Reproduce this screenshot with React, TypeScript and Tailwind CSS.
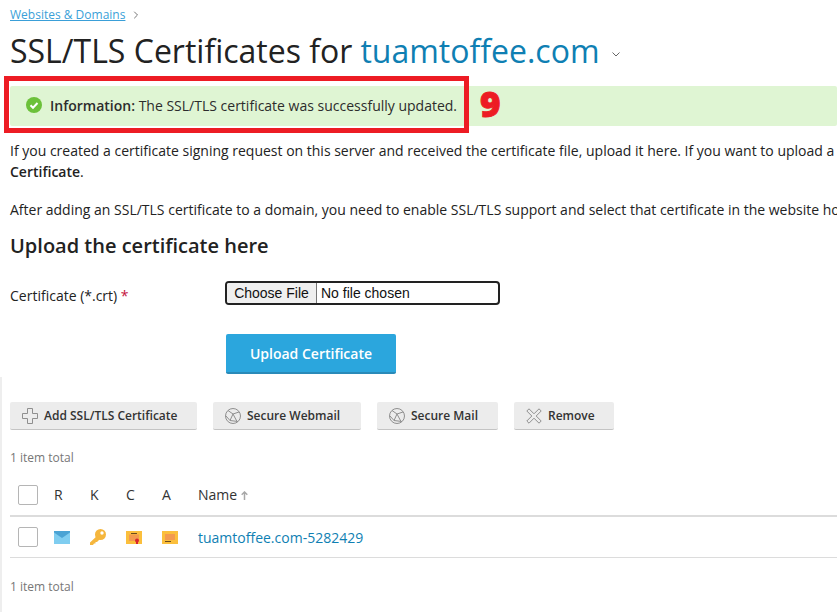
import React from 'react';
import { ChevronRight } from 'lucide-react';

const PlusIcon = () => (
  <svg width="16" height="16" viewBox="0 0 16 16" fill="none" stroke="#8f8f8f" strokeWidth="1">
    <path d="M5.5.5h5v5h5v5h-5v5h-5v-5h-5v-5h5z" />
  </svg>
);

const GlobeIcon = () => (
  <svg width="16" height="16" viewBox="0 0 16 16" fill="none" stroke="#8f8f8f" strokeWidth="1">
    <circle cx="8" cy="8" r="7.500" />
    <path d="M3 2.500 8 6l6-2M8 6 5 12.500 13 13.500M8 6l4 7.500M1 8l4 4.500" />
  </svg>
);

const CrossIcon = () => (
  <svg width="16" height="16" viewBox="0 0 16 16" fill="none" stroke="#8f8f8f" strokeWidth="1">
    <path d="M3 .8 8 5.800 13 .8 15.200 3 10.200 8l5 5-2.200 2.200-5-5-5 5L.8 13l5-5-5-5z" />
  </svg>
);

const CheckIcon = () => (
  <svg width="16" height="16" viewBox="0 0 16 16">
    <circle cx="8" cy="8" r="8" fill="#6cc13a" />
    <path d="M4.500 8.200 7 10.700l4.500-4.700" fill="none" stroke="#fff" strokeWidth="2" />
  </svg>
);

const MailIcon = () => (
  <svg className="block" width="16" height="13" viewBox="0 0 16 13">
    <rect width="16" height="13" fill="#7fcdf0" />
    <path d="M0 0h16v1.500L8 7 0 1.500z" fill="#4aa3d4" />
  </svg>
);

const KeyIcon = () => (
  <svg className="block" width="16" height="16" viewBox="0 0 16 16">
    <path d="M8 6 0 13.500V16h3l1-1.500h1.500V13H7l4-4z" fill="#f5b63d" />
    <circle cx="10.500" cy="5.500" r="5.500" fill="#f5b63d" />
    <circle cx="12" cy="4" r="1.700" fill="#fff" />
  </svg>
);

const CertIcon = () => (
  <svg className="block" width="16" height="13" viewBox="0 0 16 13">
    <rect width="16" height="13" fill="#fbbf3c" />
    <rect x="3" y="3.500" width="10" height="6.500" fill="#f39a4f" />
    <rect x="5" y="2" width="6" height="1" fill="#6b4a1e" />
    <circle cx="11" cy="9.500" r="2" fill="#d8262c" />
    <rect x="10" y="10" width="2" height="3" fill="#d8262c" />
  </svg>
);

const KeyCardIcon = () => (
  <svg className="block" width="16" height="13" viewBox="0 0 16 13">
    <rect width="16" height="13" fill="#fbbf3c" />
    <rect x="3" y="3" width="10" height="6" fill="#f39a4f" />
    <rect x="3" y="10" width="6" height="1" fill="#6b4a1e" />
  </svg>
);

const ToolButton: React.FC<{ icon: React.ReactNode; label: string; className: string }> = ({ icon, label, className }) => (
  <button className={`h-[28px] flex items-center gap-[6px] pl-3 bg-[#ececec] border-b border-[#c4c4c4] rounded-[2px] text-[12px] font-semibold text-[#333] ${className}`}>
    {icon}
    {label}
  </button>
);

const Checkbox = () => <span className="block w-5 h-5 bg-white border border-[#b5b5b5] rounded-[2px]" />;

const App: React.FC = () => {
  return (
    <div className="relative h-[612px] w-[837px] overflow-hidden bg-white pl-[10px] text-[#222] whitespace-nowrap" style={{ fontFamily: '"Open Sans", sans-serif' }}>
      <div className="absolute left-0 top-[377px] bottom-0 w-[2px] bg-[#eeeeee]" />

      <div className="flex items-center gap-[5px] pt-[6px] h-[23px] text-[12px]">
        <a className="text-[#3a9fd8] underline">Websites &amp; Domains</a>
        <ChevronRight size={12} className="text-[#777]" />
      </div>

      <div className="flex items-center mt-[4px] h-[48px] text-[32px] leading-[48px]">
        <span>SSL/TLS Certificates for</span>
        <span className="ml-[8px] text-[#0f7fb3]">tuamtoffee.com</span>
        <svg className="ml-[12px] mt-[6px]" width="8" height="5" viewBox="0 0 8 5" fill="none" stroke="#666" strokeWidth="1">
          <path d="M.5.500 4 4 7.500.500" />
        </svg>
      </div>

      <div className="mt-[11px] h-[40px] flex items-center gap-2 pl-4 pb-[2px] bg-[#dff5d3] rounded-[2px] text-[14px] text-[#2c2c2c]">
        <CheckIcon />
        <span><b className="font-semibold">Information:</b> The SSL/TLS certificate was successfully updated.</span>
      </div>
      <div className="absolute left-[4px] top-[76px] w-[465px] h-[57px] border-[5px] border-[#ed1c24]" />
      <div className="absolute left-[480px] top-[82px] text-[35px] leading-[44px] font-extrabold text-[#ed1c24] [-webkit-text-stroke:1px_#ed1c24]">9</div>

      <p className="mt-[14px] text-[14px] leading-[21px]">
        If you created a certificate signing request on this server and received the certificate file, upload it here. If you want to upload a<br />
        <b className="font-semibold">Certificate</b>.
      </p>
      <p className="mt-[17px] text-[14px] leading-[21px]">After adding an SSL/TLS certificate to a domain, you need to enable SSL/TLS support and select that certificate in the website hosting settings.</p>

      <h2 className="mt-[11px] text-[20px] leading-[30px] font-semibold">Upload the certificate here</h2>

      <div className="flex mt-[20px]">
        <label className="w-[215px] text-[14px] leading-[20px] pt-[5px]">Certificate (*.crt) <span className="text-[#c4123c]">*</span></label>
        <div className="w-[275px] h-[24px] flex items-center border-2 border-[#222] rounded-[4px] text-[14px] overflow-hidden" style={{ fontFamily: '"Liberation Sans", sans-serif' }}>
          <span className="h-full w-[90px] flex items-center justify-center bg-[#efefef] border-r border-[#777] text-[#111]">Choose File</span>
          <span className="ml-[4px] text-[#111]">No file chosen</span>
        </div>
      </div>

      <button className="block ml-[216px] mt-[28px] w-[170px] h-[40px] bg-[#2ba6dd] border-b-2 border-[#2a8ab8] rounded-[2px] text-[14px] font-semibold text-white">Upload Certificate</button>

      <div className="flex mt-[28px] gap-4">
        <ToolButton icon={<PlusIcon />} label="Add SSL/TLS Certificate" className="w-[187px]" />
        <ToolButton icon={<GlobeIcon />} label="Secure Webmail" className="w-[148px]" />
        <ToolButton icon={<GlobeIcon />} label="Secure Mail" className="w-[121px]" />
        <ToolButton icon={<CrossIcon />} label="Remove" className="w-[100px]" />
      </div>

      <div className="mt-[20px] text-[12px] leading-[16px] text-[#777]">1 item total</div>

      <div className="mt-[12px] flex items-center h-[39px] pb-[4px] border-b-2 border-[#dcdcdc] text-[14px] text-[#333]">
        <span className="pl-[8px] w-[44px]"><Checkbox /></span>
        <span className="w-[36px]">R</span>
        <span className="w-[36px]">K</span>
        <span className="w-[36px]">C</span>
        <span className="w-[36px]">A</span>
        <span>Name</span>
        <svg className="ml-[4px] mt-[2px]" width="7" height="9" viewBox="0 0 7 9" fill="none" stroke="#a8a8a8" strokeWidth="1.500">
          <path d="M3.500 9V1M.7 3.800 3.500 1l2.800 2.800" />
        </svg>
      </div>

      <div className="flex items-center h-[41px] border-b border-[#dcdcdc]">
        <span className="pl-[8px] w-[44px]"><Checkbox /></span>
        <span className="w-[36px]"><MailIcon /></span>
        <span className="w-[36px]"><KeyIcon /></span>
        <span className="w-[36px]"><CertIcon /></span>
        <span className="w-[36px]"><KeyCardIcon /></span>
        <a className="text-[14px] text-[#0f7fb3]">tuamtoffee.com-5282429</a>
      </div>

      <div className="mt-[21px] text-[12px] leading-[16px] text-[#777]">1 item total</div>
    </div>
  );
};

export default App;
